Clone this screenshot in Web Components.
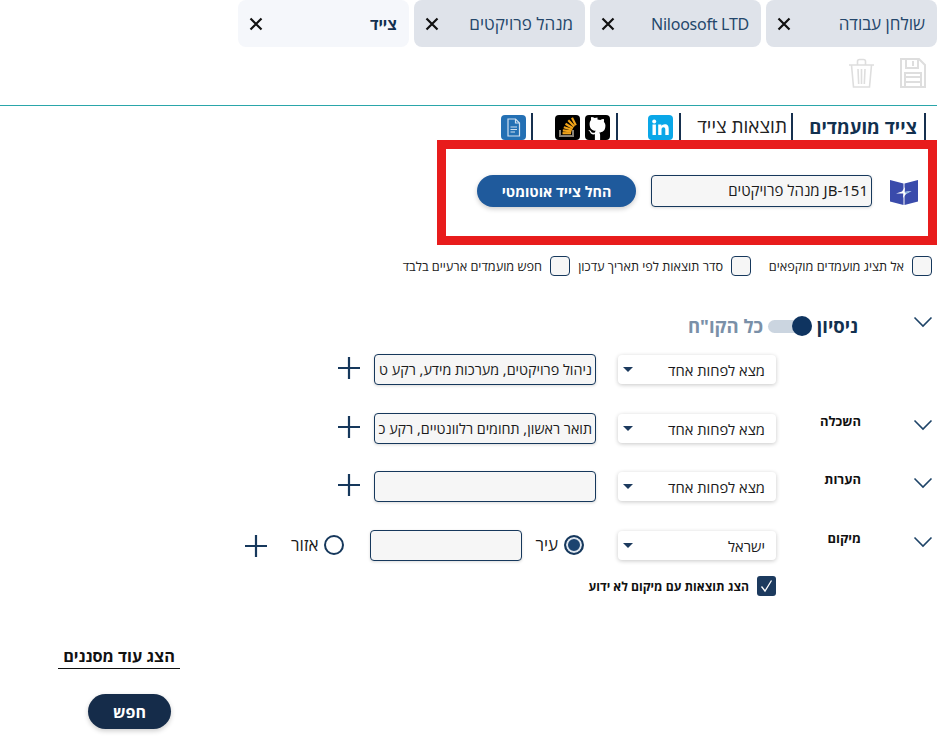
<!DOCTYPE html>
<html lang="he" dir="rtl">
<head>
<meta charset="utf-8">
<title>צייד</title>
<style>
  html, body { margin: 0; padding: 0; background: #fff; height: 750px; overflow: hidden; }
  body { font-family: "Noto Sans", "Open Sans", "Liberation Sans", sans-serif; color: #1b1b1b; }
</style>
</head>
<body>
<app-page></app-page>

<template id="page-tpl">
  <style>
    :host { display: block; width: 941px; }
    .tabs { display: flex; gap: 5px; padding-right: 4px; height: 47px; }
    .tools { display: flex; gap: 25px; height: 59px; padding: 11px 10px 0 0; box-sizing: border-box; margin-right: 4px; border-bottom: 1px solid #2aa6aa; }
    .floppy { display: block; width: 28px; height: 30px; }
    .trash { display: block; width: 25px; height: 30px; }
    .nav { display: flex; height: 27px; padding: 7px 15px 0 0; }
    .options { display: flex; padding: 11px 9px 0 0; height: 20px; }
    .options check-box:nth-child(-n+2) { width: 181px; }
    .filters { display: block; padding: 35px 8px 0 0; }
    .unknown { display: block; padding: 0 165px 0 0; margin-top: 15px; }
    .more { display: flex; justify-content: flex-end; padding-left: 58px; margin-top: 49px; }
    .more span { display: block; width: 122px; text-align: center; font-size: 16.300px; line-height: 23px; font-weight: 700; color: #111; border-bottom: 1px solid #111; }
    .go { display: flex; justify-content: flex-end; padding-left: 88px; margin-top: 25px; }
    .field { font-size: 14.300px; }
  </style>
  <div class="tabs">
    <app-tab>שולחן עבודה</app-tab>
    <app-tab><span style="font-size:16px;letter-spacing:-.25px">Niloosoft LTD</span></app-tab>
    <app-tab>מנהל פרויקטים</app-tab>
    <app-tab active>צייד</app-tab>
  </div>
  <div class="tools">
    <svg class="floppy" viewBox="0 0 28 30" fill="none" stroke="#dedede" stroke-width="2"><path d="M2 1h18l6 6v22H2z"/><path d="M7 1v9h12V1M14 3v5"/><path d="M6 29V15h16v14M6 19h16M6 24h16"/></svg>
    <svg class="trash" viewBox="0 0 25 30" fill="none" stroke="#dedede" stroke-width="1.600"><path d="M0 7h25M8.500 7V3.500a2 2 0 0 1 2-2h4a2 2 0 0 1 2 2V7"/><path d="M2.500 7l2 22h16l2-22"/><path d="M9 11l.7 15M12.500 11v15M16 11l-.7 15"/></svg>
  </div>
  <div class="nav">
    <nav-item style="width:133px">
      <span style="font-size:18.500px;font-weight:700;color:#12304f">צייד מועמדים</span>
    </nav-item>
    <nav-item style="width:112px;padding-right:4px">
      <span style="font-size:19px;color:#222">תוצאות צייד</span>
    </nav-item>
    <nav-item style="width:63px;padding-right:6px">
      <svg width="25" height="25" viewBox="0 0 25 25"><rect width="25" height="25" rx="4" fill="#0aa7e8"/><rect x="4.500" y="9.500" width="3.400" height="10.500" fill="#fff"/><circle cx="6.200" cy="6.400" r="2" fill="#fff"/><path fill="#fff" d="M10.200 9.500h3.200v1.500c.6-1 1.800-1.800 3.400-1.800 3 0 3.900 1.900 3.900 4.700V20h-3.400v-5.200c0-1.400-.4-2.500-1.800-2.500s-2 1.100-2 2.500V20h-3.300z"/></svg>
    </nav-item>
    <nav-item style="width:85px;padding-right:6px">
      <span style="display:flex;gap:5px">
        <svg width="25" height="25" viewBox="0 0 25 25"><rect width="25" height="25" rx="4" fill="#000"/><path fill="#fff" d="M12.500 2.600c-1 0-2 .2-2.800.5C8.300 2.200 7 1.900 6.300 2.100c-.5 1.100-.4 2.300-.2 2.800C5.100 6 4.600 7.300 4.600 8.900c0 5.300 3.200 6.500 6.200 6.900-.5.400-.8 1-.9 1.700-.8.400-2.700.9-3.800-1-.3-.5-1.100-1.400-2.200-1.400-.5 0-.4.400.1.700.5.300 1 1.100 1.300 1.700.4 1 1.600 2.400 4.600 1.800V25h5.200v-4.900c0-1.300-.4-2-.9-2.500 3-.3 6.200-1.500 6.200-6.800 0-1.600-.5-2.900-1.500-3.900.2-.5.300-1.700-.2-2.800-.7-.2-2 .1-3.400 1-.8-.3-1.800-.5-2.800-.5z"/></svg>
        <svg width="25" height="25" viewBox="0 0 25 25"><rect width="25" height="25" rx="4" fill="#000"/><path fill="none" stroke="#8a8478" stroke-width="2" d="M5 15v6h13v-6"/><g stroke="#f2a51a" stroke-width="2.200" fill="none"><path d="M7.500 18.200h8.500"/><path d="M7.800 15.400l8.600.9"/><path d="M8.800 12.200l8.400 2.500"/><path d="M10.500 8.700l7.500 4.500"/><path d="M13.300 5.300l6 6.300"/><path d="M17 2.800l3.800 7.500"/></g></svg>
      </span>
    </nav-item>
    <nav-item style="padding-right:5px">
      <svg width="25" height="25" viewBox="0 0 25 25" fill="none"><rect width="25" height="25" rx="4" fill="#2470b4"/><path stroke="#cfe0f0" stroke-width="1.200" d="M7 4h7.500L18.500 8v13H7z"/><path stroke="#cfe0f0" stroke-width="1.200" d="M14.500 4v4h4M9.500 12h6.500M9.500 14.500h6.500M9.500 17h4.500"/></svg>
    </nav-item>
  </div>
  <red-box></red-box>
  <div class="options">
    <check-box>אל תציג מועמדים מוקפאים</check-box>
    <check-box>סדר תוצאות לפי תאריך עדכון</check-box>
    <check-box>חפש מועמדים ארעיים בלבד</check-box>
  </div>
  <div class="filters">
    <head-row></head-row>
    <filter-row style="margin-top:12px">
      <text-box class="field">ניהול פרויקטים, מערכות מידע, רקע ט</text-box>
    </filter-row>
    <filter-row label="השכלה" style="margin-top:28px">
      <text-box class="field">תואר ראשון, תחומים רלוונטיים, רקע כ</text-box>
    </filter-row>
    <filter-row label="הערות" style="margin-top:27px">
      <text-box class="field"></text-box>
    </filter-row>
    <filter-row label="מיקום" value="ישראל" style="margin-top:28px">
      <place-fields></place-fields>
    </filter-row>
  </div>
  <div class="unknown"><check-box checked bold>הצג תוצאות עם מיקום לא ידוע</check-box></div>
  <div class="more"><span>הצג עוד מסננים</span></div>
  <div class="go"><pill-button dark style="width:83px;height:35px">חפש</pill-button></div>
</template>

<template id="tab-tpl">
  <style>
    :host { display: flex; align-items: center; justify-content: space-between; box-sizing: border-box; width: 171px; height: 47px; padding: 0 12px 0 11px; background: #dfe3ea; border-radius: 8px; font-size: 17px; color: #24476b; }
    :host([active]) { background: #f5f7fb; font-weight: 700; font-size: 15.500px; color: #12304f; }
    svg { display: block; }
  </style>
  <slot></slot>
  <svg width="14" height="14" viewBox="0 0 14 14"><path d="M1.500 1.500l11 11M12.500 1.500l-11 11" stroke="#111" stroke-width="2.200" fill="none"/></svg>
</template>

<template id="nav-tpl">
  <style>
    :host { display: flex; align-items: flex-end; box-sizing: border-box; height: 27px; padding-right: 7px; border-right: 2px solid #16304f; white-space: nowrap; line-height: 27px; }
  </style>
  <slot></slot>
</template>

<template id="red-tpl">
  <style>
    :host { display: flex; align-items: center; box-sizing: border-box; width: 500px; height: 105px; margin-right: 4px; border: 9px solid #e81c1c; padding: 0 10px 3px 0; }
    svg { display: block; margin-left: 18px; margin-top: 3px; }
    text-box { width: 221px; height: 32px; margin-left: 15px; font-size: 15px; }
  </style>
  <svg width="28" height="25" viewBox="0 0 28 25"><path fill="#3a4bab" d="M0 0l13.500 3.500V25L0 21.500zM14.500 3.500L28 0v21.500L14.500 25z"/><path fill="#fff" d="M6 13.500l6-2 3-4.500-.5 5 7-1-5.500 3-3 4 .5-4.500z"/><path fill="#8fb7e0" d="M14.500 12l7-1-5.500 3z"/></svg>
  <text-box>JB-151 מנהל פרויקטים</text-box>
  <pill-button style="width:159px;height:32px">החל צייד אוטומטי</pill-button>
</template>

<template id="pill-tpl">
  <style>
    :host { display: flex; align-items: center; justify-content: center; box-sizing: border-box; border-radius: 20px; background: #1f5a9c; color: #fff; font-size: 14.300px; font-weight: 700; box-shadow: 0 2px 5px rgba(0,0,0,.2); }
    :host([dark]) { background: #152c4a; font-size: 16px; }
  </style>
  <slot></slot>
</template>

<template id="box-tpl">
  <style>
    :host { display: block; box-sizing: border-box; width: 222px; height: 31px; padding: 0 3px; background: #f6f6f6; border: 1px solid #16385c; border-radius: 4px; line-height: 29px; color: #1b1b1b; box-shadow: 0 1px 3px rgba(0,0,0,.15); }
    div { overflow: hidden; white-space: nowrap; height: 29px; }
  </style>
  <div><slot></slot></div>
</template>

<template id="check-tpl">
  <style>
    :host { display: flex; align-items: center; gap: 8px; font-size: 12.700px; white-space: nowrap; color: #222; }
    :host([bold]) { font-weight: 700; color: #111; font-size: 12.200px; }
    i { display: block; box-sizing: border-box; flex: none; width: 20px; height: 20px; background: #f6f6f6; border: 1px solid #16385c; border-radius: 4px; }
    :host([checked]) i { display: none; }
    svg { display: none; flex: none; }
    :host([checked]) svg { display: block; }
  </style>
  <i></i>
  <svg width="19" height="20" viewBox="0 0 19 20"><rect width="19" height="20" rx="3" fill="#1c3a5e"/><path d="M4.500 10.500l3.500 4.500 6.500-10.500" fill="none" stroke="#fff" stroke-width="1.300"/></svg>
  <slot></slot>
</template>

<template id="head-tpl">
  <style>
    :host { display: flex; align-items: flex-start; height: 31px; }
    .chev { display: block; width: 20px; margin-left: 55px; margin-top: 5px; }
    .title { font-size: 18.500px; font-weight: 700; color: #12304f; line-height: 30px; width: 0; white-space: nowrap; }
    .switch { position: relative; width: 44px; height: 13px; margin-top: 9px; margin-right: 46px; background: #cbd5e0; border-radius: 7px; }
    .knob { position: absolute; right: 0; top: -4px; width: 20px; height: 20px; border-radius: 50%; background: #0f3460; }
    .all { font-size: 18.500px; font-weight: 700; color: #7a90a8; line-height: 30px; margin-right: 5px; }
  </style>
  <chevron-down class="chev"></chevron-down>
  <span class="title">ניסיון</span>
  <div class="switch"><div class="knob"></div></div>
  <span class="all">כל הקו"ח</span>
</template>

<template id="chev-tpl">
  <style>
    :host { display: block; height: 12px; }
    svg { display: block; }
  </style>
  <svg width="20" height="12" viewBox="0 0 20 12"><path d="M1.500 1.500l8.500 8.500 8.500-8.500" fill="none" stroke="#1e4468" stroke-width="1.600"/></svg>
</template>

<template id="row-tpl">
  <style>
    :host { display: flex; align-items: flex-start; height: 31px; }
    chevron-down { width: 20px; margin-top: 6px; flex: none; }
    :host(:not([label])) chevron-down { visibility: hidden; }
    .label { flex: none; width: 85px; margin-right: 52px; margin-top: -2px; font-size: 13px; line-height: 20px; font-weight: 700; color: #111; box-sizing: border-box; }
    .sel { flex: none; display: flex; align-items: center; justify-content: space-between; box-sizing: border-box; width: 158px; height: 29px; margin: 1px 0 0 22px; padding: 0 11px 0 4px; background: #fff; border-radius: 4px; box-shadow: 0 1px 4px rgba(0,0,0,.22); font-size: 14.700px; color: #1b1b1b; }
    .arrow { width: 0; height: 0; border-left: 5px solid transparent; border-right: 5px solid transparent; border-top: 5px solid #1c3a5e; margin-left: 1px; }
    plus-icon { margin-right: 14px; margin-top: 3px; }
    :host([value]) plus-icon { margin-right: 24px; margin-top: 5px; }
    .fields { display: flex; align-items: flex-start; }
  </style>
  <chevron-down></chevron-down>
  <div class="label"></div>
  <div class="sel"><span class="val">מצא לפחות אחד</span><span class="arrow"></span></div>
  <div class="fields"><slot></slot></div>
  <plus-icon></plus-icon>
</template>

<template id="place-tpl">
  <style>
    :host { display: flex; align-items: flex-start; font-size: 17px; color: #1b1b1b; }
    .opt { display: flex; align-items: center; gap: 6px; height: 29px; }
    .dot { box-sizing: border-box; width: 20px; height: 20px; border-radius: 50%; border: 2px solid #16385c; background: #fff; }
    .dot.on { background: #1c4470; box-shadow: inset 0 0 0 2px #dfe6ee; }
    text-box { width: 152px; margin: 0 13px 0 26px; }
  </style>
  <div class="opt" style="margin-right:12px"><span class="dot on"></span><span>עיר</span></div>
  <text-box></text-box>
  <div class="opt"><span class="dot"></span><span>אזור</span></div>
</template>

<template id="plus-tpl">
  <style>
    :host { display: block; width: 22px; height: 22px; flex: none; }
    svg { display: block; }
  </style>
  <svg width="22" height="22" viewBox="0 0 22 22"><path d="M11 0v22M0 11h22" stroke="#16385c" stroke-width="2.200" fill="none"/></svg>
</template>

<script>
  function tpl(id) {
    return document.getElementById(id).content.cloneNode(true);
  }

  function simple(name, id) {
    customElements.define(name, class extends HTMLElement {
      constructor() {
        super();
        this.attachShadow({ mode: 'open' }).appendChild(tpl(id));
      }
    });
  }

  class FilterRow extends HTMLElement {
    constructor() {
      super();
      this.attachShadow({ mode: 'open' }).appendChild(tpl('row-tpl'));
    }

    connectedCallback() {
      this.shadowRoot.querySelector('.label').textContent = this.getAttribute('label') || '';
      if (this.hasAttribute('value')) {
        this.shadowRoot.querySelector('.val').textContent = this.getAttribute('value');
      }
    }
  }

  customElements.define('filter-row', FilterRow);
  simple('app-tab', 'tab-tpl');
  simple('nav-item', 'nav-tpl');
  simple('red-box', 'red-tpl');
  simple('pill-button', 'pill-tpl');
  simple('text-box', 'box-tpl');
  simple('check-box', 'check-tpl');
  simple('head-row', 'head-tpl');
  simple('chevron-down', 'chev-tpl');
  simple('place-fields', 'place-tpl');
  simple('plus-icon', 'plus-tpl');
  simple('app-page', 'page-tpl');
</script>
</body>
</html>
